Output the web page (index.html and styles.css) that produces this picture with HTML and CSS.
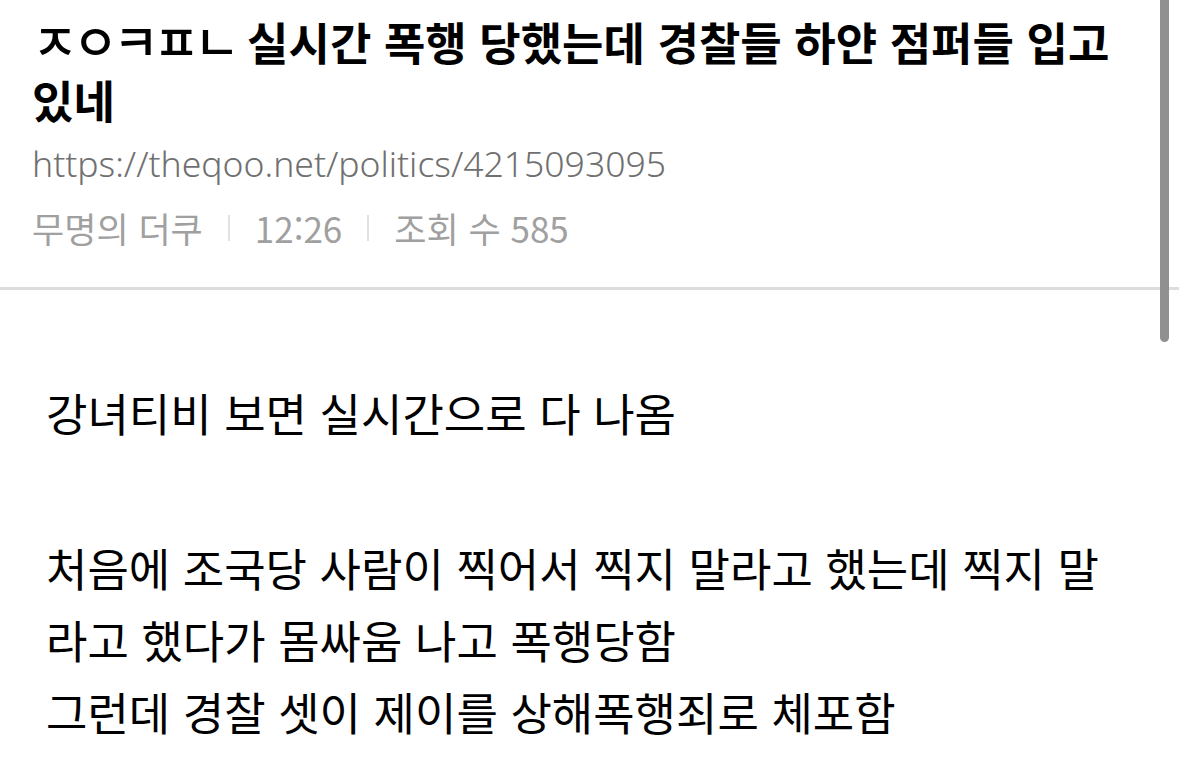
FILE: index.html
```html
<!DOCTYPE html>
<html lang="ko">
<head>
    <meta charset="UTF-8">
    <meta name="viewport" content="width=device-width, initial-scale=1.0">
    <title>실시간 폭행 당했는데 경찰들 하얀 점퍼들 입고 있네</title>
    <link rel="stylesheet" href="styles.css">
</head>
<body>
    <div class="scrollbar"></div>

    <div class="post-header">
        <h1 class="post-title"><span class="jamo">ㅈㅇㅋㅍㄴ</span> 실시간 폭행 당했는데 경찰들 하얀 점퍼들 입고 있네</h1>
        <div class="post-url">https://theqoo.net/politics/4215093095</div>
        <div class="post-meta">
            <span>무명의 더쿠</span>
            <span class="sep"></span>
            <span>12:26</span>
            <span class="sep"></span>
            <span>조회 수 585</span>
        </div>
    </div>

    <div class="post-body">
        <p>강녀티비 보면 실시간으로 다 나옴</p>
        <p class="blank">&nbsp;</p>
        <p>처음에 조국당 사람이 찍어서 찍지 말라고 했는데 찍지 말라고 했다가 몸싸움 나고 폭행당함</p>
        <p>그런데 경찰 셋이 제이를 상해폭행죄로 체포함</p>
    </div>
</body>
</html>
```

FILE: styles.css
```css
body {
    font-family: "Noto Sans CJK KR", "Noto Sans", sans-serif;
    margin: 0;
    background-color: #fff;
    color: #111;
    overflow: hidden;
}
.scrollbar {
    position: fixed;
    top: 0;
    right: 10px;
    width: 9px;
    height: 342px;
    background-color: #909090;
    border-radius: 0 0 5px 5px;
}
.post-header {
    padding: 13px 40px 0 32px;
    border-bottom: 3px solid #dddddd;
    height: 290px;
    box-sizing: border-box;
}
.post-title {
    font-size: 45px;
    font-weight: 700;
    line-height: 58px;
    margin: 0;
    color: #000;
    word-break: keep-all;
}
.jamo {
    font-size: 50px;
    font-weight: 500;
    letter-spacing: -5.5px;
    line-height: 50px;
}
.post-url {
    margin-top: 12px;
    font-size: 35.5px;
    color: #707070;
    line-height: 44px;
    font-family: "Noto Sans", "Noto Sans CJK KR", sans-serif;
    font-weight: 300;
}
.post-meta {
    margin-top: 21px;
    font-size: 35px;
    color: #a0a0a0;
    line-height: 44px;
    display: flex;
    align-items: center;
    gap: 25px;
}
.sep {
    width: 2px;
    height: 26px;
    background-color: #e2e2e2;
}
.post-body {
    padding: 87px 60px 0 46px;
}
.post-body p {
    margin: 0;
    font-size: 45px;
    line-height: 72px;
    color: #000;
    word-break: break-all;
}
.post-body .blank {
    height: 83px;
}
```
